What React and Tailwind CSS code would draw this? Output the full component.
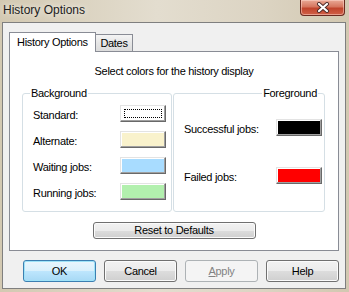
import React from "react";

const btn =
  "flex items-center justify-center rounded-[3px] border border-[#707070] bg-[linear-gradient(#f2f2f2,#ebebeb_50%,#dddddd_50%,#cfcfcf)] shadow-[inset_0_0_0_1px_#fbfbfb]";

function Swatch({ color, focus }) {
  return (
    <div
      className="w-[46px] h-[17px] flex border-t border-l border-t-[#e3e3e3] border-l-[#e3e3e3] border-r border-b border-r-[#696969] border-b-[#696969] shadow-[inset_-1px_-1px_0_#a0a0a0,inset_1px_1px_0_#ffffff]"
      style={{ backgroundColor: color }}
    >
      {focus && <div className="m-[3px] flex-1 border border-dotted border-black" />}
    </div>
  );
}

function Row({ label, color, focus }) {
  return (
    <div className="flex items-center justify-between h-[17px]">
      <span className="pt-[3px]">{label}</span>
      <Swatch color={color} focus={focus} />
    </div>
  );
}

export default function App() {
  return (
    <div
      className="w-[349px] h-[292px] flex flex-col overflow-hidden bg-[linear-gradient(90deg,#d3c9b2,#e3ddcf_45%,#dcd4c3_75%,#d2c8b1)] text-black"
      style={{ fontFamily: '"Liberation Sans", Arial, sans-serif' }}
    >
      {/* title bar */}
      <div className="h-[22px] flex items-start shrink-0">
        <span className="pl-[3px] pt-[3px] text-[12px] leading-[15px] text-[#1c1c1c] [text-shadow:0_0_6px_#ffffff]">
          History Options
        </span>
        <div className="ml-auto mr-[4px] w-[45px] h-[16px] rounded-b-[4px] border border-t-0 border-[#6b2a20] bg-[linear-gradient(#e9a996,#d6765f_45%,#c0442c_55%,#d06048)] flex items-center justify-center shadow-[inset_0_0_0_1px_rgba(255,220,210,0.5)]">
          <svg width="14" height="11" viewBox="0 0 14 11">
            <path d="M3 2 L11 9 M11 2 L3 9" stroke="#4a2a28" strokeWidth="4" strokeLinecap="round" />
            <path d="M3 2 L11 9 M11 2 L3 9" stroke="#ffffff" strokeWidth="2.2" strokeLinecap="round" />
          </svg>
        </div>
      </div>

      {/* client area */}
      <div className="flex-1 ml-[2px] mr-[3px] mb-[3px] border border-[#7f7f7f] bg-[#f0f0f0] flex flex-col pl-[6px] pt-[9px] text-[11px] leading-[13px] tracking-[-0.3px]">
        {/* tabs */}
        <div className="flex items-end h-[19px]">
          <div className="relative z-10 w-[87px] h-[20px] -mb-px border border-b-0 border-[#898c95] bg-white pl-[7px] pt-[3px]">
            History Options
          </div>
          <div className="w-[37px] h-[17px] border border-l-0 border-b-0 border-[#898c95] bg-[linear-gradient(#f4f4f4,#e6e6e6_50%,#dcdcdc)] flex justify-center pt-[2px]">
            Dates
          </div>
        </div>

        {/* panel */}
        <div className="w-[330px] h-[200px] border border-[#898c95] bg-white flex flex-col items-center pt-[13px]">
          <div>Select colors for the history display</div>

          <div className="mt-[9px] flex gap-[1px] self-stretch px-[12px]">
            <fieldset className="w-[150px] h-[125px] border border-[#d5dfe5] rounded-[3px]">
              <legend className="ml-[7px] px-[1px] leading-[12px]">Background</legend>
              <div className="flex flex-col gap-[9px] pt-[6px] pl-[10px] pr-[5px]">
                <Row label="Standard:" color="#ffffff" focus />
                <Row label="Alternate:" color="#f9f2cc" />
                <Row label="Waiting jobs:" color="#a8dcff" />
                <Row label="Running jobs:" color="#b2f0ae" />
              </div>
            </fieldset>
            <fieldset className="w-[152px] h-[125px] border border-[#d5dfe5] rounded-[3px]">
              <legend className="ml-auto mr-[6px] px-[1px] leading-[12px]">Foreground</legend>
              <div className="flex flex-col gap-[31px] pt-[20px] pl-[10px] pr-[2px]">
                <Row label="Successful jobs:" color="#000000" />
                <Row label="Failed jobs:" color="#ff0000" />
              </div>
            </fieldset>
          </div>

          <div className={`${btn} mt-[10px] w-[163px] h-[17px]`}>Reset to Defaults</div>
        </div>

        {/* bottom buttons */}
        <div className="mt-[9px] pl-[14px] flex gap-[8px]">
          <div className="w-[73px] h-[22px] flex items-center justify-center rounded-[3px] border border-[#3c7fb1] bg-[linear-gradient(#eaf6fd,#d9f0fc_50%,#bee6fd_50%,#a7d9f5)] shadow-[inset_0_0_0_1px_#9fe3f8]">
            OK
          </div>
          <div className={`${btn} w-[73px] h-[22px]`}>Cancel</div>
          <div className="w-[73px] h-[22px] flex items-center justify-center rounded-[3px] border border-[#adb2b5] bg-[#f4f4f4] text-[#838383]">
            <span>
              <span className="underline">A</span>pply
            </span>
          </div>
          <div className={`${btn} w-[73px] h-[22px]`}>Help</div>
        </div>
      </div>
    </div>
  );
}
